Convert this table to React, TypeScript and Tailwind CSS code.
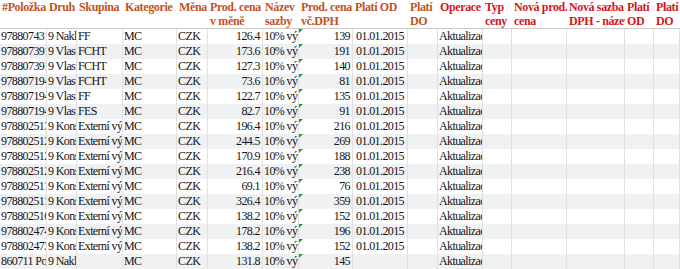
import React from "react";

const cols =
  "grid grid-cols-[47px_30px_46px_54px_31px_55px_36px_54px_55px_30px_45px_29px_55px_58px_29px_26px]";

type Row = {
  id: string;
  druh: string;
  sk: string;
  cena: string;
  dph: string;
  od: string;
};

const rows: Row[] = [
  { id: "9788074312345", druh: "9 Nakladatelství", sk: "FF", cena: "126.4", dph: "139", od: "01.01.2015" },
  { id: "9788073912345", druh: "9 Vlastní", sk: "FCHT", cena: "173.6", dph: "191", od: "01.01.2015" },
  { id: "9788073912346", druh: "9 Vlastní", sk: "FCHT", cena: "127.3", dph: "140", od: "01.01.2015" },
  { id: "9788071945678", druh: "9 Vlastní", sk: "FCHT", cena: "73.6", dph: "81", od: "01.01.2015" },
  { id: "9788071945679", druh: "9 Vlastní", sk: "FF", cena: "122.7", dph: "135", od: "01.01.2015" },
  { id: "9788071946789", druh: "9 Vlastní", sk: "FES", cena: "82.7", dph: "91", od: "01.01.2015" },
  { id: "9788025133333", druh: "9 Konsignace", sk: "Externí výroba", cena: "196.4", dph: "216", od: "01.01.2015" },
  { id: "9788025122222", druh: "9 Konsignace", sk: "Externí výroba", cena: "244.5", dph: "269", od: "01.01.2015" },
  { id: "9788025122223", druh: "9 Konsignace", sk: "Externí výroba", cena: "170.9", dph: "188", od: "01.01.2015" },
  { id: "9788025122224", druh: "9 Konsignace", sk: "Externí výroba", cena: "216.4", dph: "238", od: "01.01.2015" },
  { id: "9788025111111", druh: "9 Konsignace", sk: "Externí výroba", cena: "69.1", dph: "76", od: "01.01.2015" },
  { id: "9788025111112", druh: "9 Konsignace", sk: "Externí výroba", cena: "326.4", dph: "359", od: "01.01.2015" },
  { id: "9788025100000", druh: "9 Konsignace", sk: "Externí výroba", cena: "138.2", dph: "152", od: "01.01.2015" },
  { id: "9788024744444", druh: "9 Konsignace", sk: "Externí výroba", cena: "178.2", dph: "196", od: "01.01.2015" },
  { id: "9788024733333", druh: "9 Konsignace", sk: "Externí výroba", cena: "138.2", dph: "152", od: "01.01.2015" },
  { id: "860711 Podklady", druh: "9 Nakladatelství", sk: "", cena: "131.8", dph: "145", od: "" },
];

const headers: { l1: string; l2: string; red?: boolean }[] = [
  { l1: "#Položka", l2: "" },
  { l1: "Druh", l2: "" },
  { l1: "Skupina", l2: "" },
  { l1: "Kategorie", l2: "" },
  { l1: "Měna", l2: "" },
  { l1: "Prod. cena", l2: "v měně" },
  { l1: "Název", l2: "sazby" },
  { l1: "Prod. cena", l2: "vč.DPH" },
  { l1: "Platí OD", l2: "" },
  { l1: "Platí", l2: "DO" },
  { l1: "Operace", l2: "", red: true },
  { l1: "Typ", l2: "ceny", red: true },
  { l1: "Nová prod.", l2: "cena", red: true },
  { l1: "Nová sazba", l2: "DPH - název", red: true },
  { l1: "Platí", l2: "OD", red: true },
  { l1: "Platí", l2: "DO", red: true },
];

function Cell({ children, right, extra }: { children?: React.ReactNode; right?: boolean; extra?: React.ReactNode }) {
  return (
    <div
      className={
        "relative h-[15px] overflow-hidden whitespace-nowrap border-r border-[#e1e1e1] leading-[15px] " +
        (right ? "text-right pr-[2px]" : "pl-[1px]")
      }
    >
      {extra}
      {children}
    </div>
  );
}

export default function App() {
  return (
    <div className="w-[680px] h-[269px] overflow-hidden bg-white font-['Liberation_Serif','Times_New_Roman',serif] text-[12px] text-[#141414]">
      <div className={cols + " h-[29px] border-b border-[#c9c9c9] bg-white font-bold leading-[14px] tracking-[-0.03em]"}>
        {headers.map((h, i) => (
          <div
            key={i}
            className={
              "overflow-hidden whitespace-nowrap pl-[2px] " + (h.red ? "text-[#d4161c]" : "text-[#c2521f]")
            }
          >
            <div>{h.l1}</div>
            <div>{h.l2}</div>
          </div>
        ))}
      </div>
      {rows.map((r, i) => (
        <div
          key={i}
          className={cols + " tracking-[-0.05em] " + (i % 2 === 0 ? "bg-white" : "bg-[#f0f1f2]")}
        >
          <Cell>{r.id}</Cell>
          <Cell>{r.druh}</Cell>
          <Cell>{r.sk}</Cell>
          <Cell>MC</Cell>
          <Cell>CZK</Cell>
          <Cell right>{r.cena}</Cell>
          <Cell>10% výstup</Cell>
          <Cell
            right
            extra={
              <span className="absolute left-[-1px] top-0 h-0 w-0 border-r-[5px] border-t-[5px] border-r-transparent border-t-[#1f9a2c]" />
            }
          >
            {r.dph}
          </Cell>
          <Cell>
            <span className="pl-[2px]">{r.od}</span>
          </Cell>
          <Cell />
          <Cell>Aktualizace</Cell>
          <Cell />
          <Cell />
          <Cell />
          <Cell />
          <Cell />
        </div>
      ))}
    </div>
  );
}
